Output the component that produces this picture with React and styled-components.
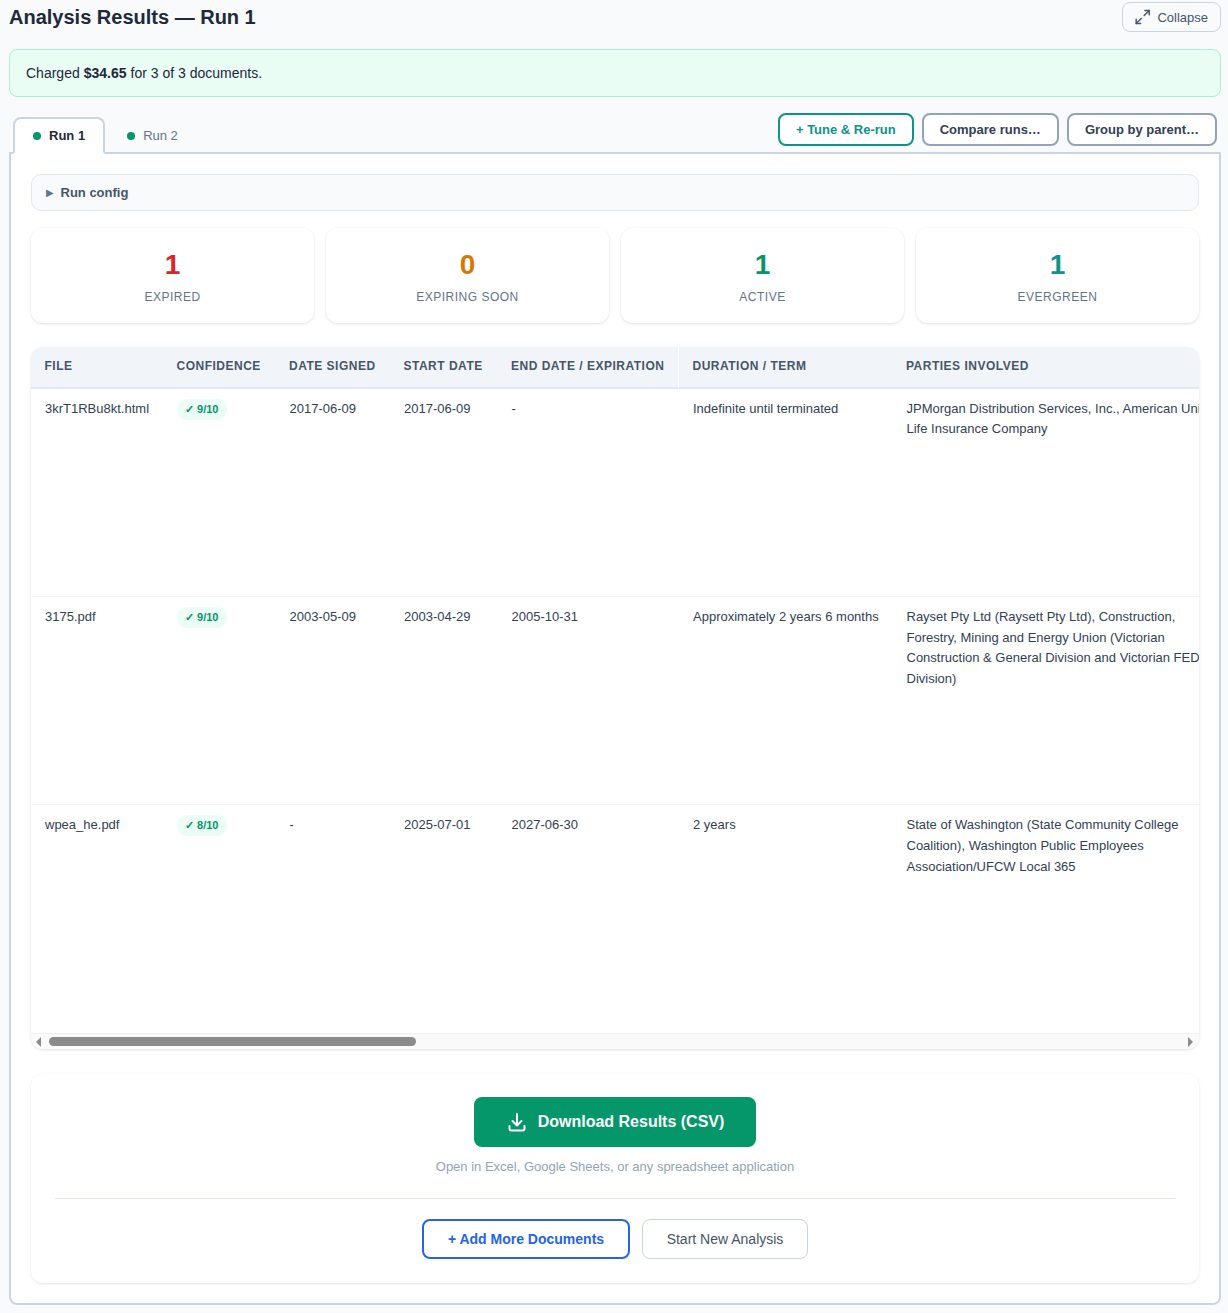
import React from "react";
import styled, { createGlobalStyle } from "styled-components";
import { Maximize2 } from "lucide-react";

const Global = createGlobalStyle`
  html, body { margin: 0; padding: 0; background: #f8fafc; }
  body { font-family: "Liberation Sans", Arial, sans-serif; color: #1e293b; }
  * { box-sizing: border-box; }
`;

const Page = styled.div`
  padding: 2px 7px 9px 9px;
`;
const Header = styled.header`
  display: flex;
  justify-content: space-between;
  align-items: flex-start;
  height: 47px;
`;
const Title = styled.h2`
  margin: 3px 0 0;
  font-size: 20px;
  line-height: 24px;
  font-weight: 700;
  color: #1e293b;
`;
const CollapseButton = styled.button`
  display: inline-flex;
  align-items: center;
  gap: 6px;
  width: 99px;
  height: 30px;
  padding: 0 12px 0 11px;
  border: 1px solid #cbd5e1;
  border-radius: 8px;
  background: #f8fafc;
  color: #475569;
  font: 13px "Liberation Sans", Arial, sans-serif;
  white-space: nowrap;
`;
const Alert = styled.div`
  height: 48px;
  padding: 0 16px;
  display: flex;
  align-items: center;
  background: #e9fdf4;
  border: 1px solid #a7f3d0;
  border-radius: 8px;
  font-size: 14px;
  color: #1e293b;
  strong { margin: 0 4px; }
`;
const TabBar = styled.div`
  display: flex;
  justify-content: space-between;
  align-items: flex-start;
  height: 57px;
  padding: 16px 4px 0 4px;
  position: relative;
  z-index: 1;
`;
const Tabs = styled.div`
  display: flex;
  gap: 2px;
  padding-top: 4px;
`;
const Tab = styled.button`
  display: inline-flex;
  align-items: center;
  gap: 8px;
  height: 37px;
  padding: 0 18px;
  border: 2px solid ${(p) => (p.$active ? "#cbd5e1" : "transparent")};
  border-bottom: ${(p) => (p.$active ? "2px solid #fff" : "2px solid transparent")};
  border-radius: 8px 8px 0 0;
  background: ${(p) => (p.$active ? "#fff" : "transparent")};
  color: ${(p) => (p.$active ? "#1e293b" : "#64748b")};
  font: ${(p) => (p.$active ? 700 : 400)} 13px "Liberation Sans", Arial, sans-serif;
`;
const Dot = styled.span`
  width: 8px;
  height: 8px;
  border-radius: 50%;
  background: #059669;
`;
const Actions = styled.div`
  display: flex;
  gap: 8px;
`;
const ActionButton = styled.button`
  height: 33px;
  padding: 0 16px;
  background: #fff;
  border: 2px solid ${(p) => (p.$accent ? "#0d9488" : "#94a3b8")};
  border-radius: 8px;
  color: ${(p) => (p.$accent ? "#0d9488" : "#334155")};
  font: 700 13px "Liberation Sans", Arial, sans-serif;
  white-space: nowrap;
`;
const Panel = styled.section`
  margin-top: -2px;
  padding: 20px 20px 20px;
  background: #fff;
  border: 2px solid #cbd5e1;
  border-radius: 0 0 8px 8px;
`;
const Config = styled.div`
  height: 37px;
  display: flex;
  align-items: center;
  gap: 6.5px;
  padding: 0 14px;
  background: #f8fafc;
  border: 1px solid #e2e8f0;
  border-radius: 10px;
  color: #475569;
  font-size: 13px;
  font-weight: 700;
`;
const Caret = styled.span`
  font-size: 10px;
  color: #64748b;
  font-weight: 400;
`;
const Stats = styled.div`
  display: grid;
  grid-template-columns: repeat(4, 1fr);
  gap: 12px;
  margin-top: 17px;
`;
const StatCard = styled.div`
  height: 95px;
  padding-top: 20px;
  text-align: center;
  background: #fff;
  border-radius: 12px;
  box-shadow: 0 1px 3px rgba(0, 0, 0, 0.12);
`;
const StatValue = styled.div`
  font-size: 28px;
  line-height: 34px;
  font-weight: 700;
  color: ${(p) => p.$color};
`;
const StatLabel = styled.div`
  margin-top: 7px;
  font-size: 12px;
  line-height: 16px;
  letter-spacing: 0.5px;
  color: #64748b;
`;
const TableWrap = styled.div`
  margin-top: 24px;
  border-radius: 12px;
  overflow: hidden;
  box-shadow: 0 1px 3px rgba(0, 0, 0, 0.12);
`;
const TableViewport = styled.div`
  overflow: hidden;
`;
const Table = styled.table`
  width: 3563px;
  table-layout: fixed;
  border-collapse: separate;
  border-spacing: 0;
  font-size: 13px;
`;
const Col = styled.col`
  width: ${(p) => p.$w}px;
`;
const Th = styled.th`
  height: 42px;
  padding: 0 14px 2px 13.5px;
  text-align: left;
  background: #f1f5f9;
  border-bottom: 2px solid #e2e8f0;
  border-right: ${(p) => (p.$divider ? "1px solid #fff" : "none")};
  color: #475569;
  font-size: 12px;
  font-weight: 700;
  letter-spacing: 0.5px;
  text-transform: uppercase;
  white-space: nowrap;
`;
const Row = styled.tr`
  height: ${(p) => p.$h}px;
`;
const Td = styled.td`
  padding: ${(p) => p.$top}px 14px 10px;
  vertical-align: top;
  color: #334155;
  line-height: 20.8px;
  white-space: ${(p) => (p.$nowrap ? "nowrap" : "normal")};
  border-bottom: ${(p) => (p.$last ? "none" : "1px solid #f1f5f9")};
`;
const Badge = styled.span`
  display: inline-block;
  height: 21px;
  padding: 0 8.5px 0 8px;
  border-radius: 11px;
  background: #ecfdf5;
  color: #059669;
  font-size: 11px;
  font-weight: 700;
  line-height: 21px;
  white-space: nowrap;
`;
const ScrollBar = styled.div`
  display: flex;
  align-items: center;
  height: 16px;
  padding: 0 6px 0 5px;
  background: #fafafa;
  border-top: 1px solid #f0f0f0;
`;
const ArrowLeft = styled.span`
  width: 0;
  height: 0;
  border-top: 5px solid transparent;
  border-bottom: 5px solid transparent;
  border-right: 5px solid #8b8b8b;
`;
const ArrowRight = styled.span`
  width: 0;
  height: 0;
  margin-left: auto;
  border-top: 5px solid transparent;
  border-bottom: 5px solid transparent;
  border-left: 5px solid #8b8b8b;
`;
const Thumb = styled.span`
  width: 367px;
  height: 9px;
  margin-left: 8px;
  border-radius: 5px;
  background: #8b8b8b;
`;
const BottomCard = styled.div`
  margin-top: 25px;
  padding: 23px 24px 24px;
  background: #fff;
  border-radius: 12px;
  box-shadow: 0 1px 3px rgba(0, 0, 0, 0.1);
  display: flex;
  flex-direction: column;
  align-items: center;
`;
const DownloadButton = styled.button`
  display: inline-flex;
  align-items: center;
  justify-content: center;
  gap: 12px;
  width: 282px;
  height: 50px;
  padding: 0 0 0 2px;
  border: none;
  border-radius: 8px;
  background: #059669;
  color: #fff;
  font: 700 16px "Liberation Sans", Arial, sans-serif;
`;
const Hint = styled.div`
  margin-top: 11px;
  font-size: 13px;
  line-height: 17px;
  color: #94a3b8;
`;
const Divider = styled.hr`
  width: 100%;
  height: 1px;
  margin: 23px 0 20px;
  border: none;
  background: #e2e8f0;
`;
const BottomActions = styled.div`
  display: flex;
  gap: 12px;
`;
const AddButton = styled.button`
  width: 208px;
  height: 40px;
  background: #fff;
  border: 2px solid #2563eb;
  border-radius: 8px;
  color: #2563eb;
  font: 700 14px "Liberation Sans", Arial, sans-serif;
`;
const NewButton = styled.button`
  width: 166px;
  height: 40px;
  background: #fff;
  border: 1px solid #cbd5e1;
  border-radius: 8px;
  color: #475569;
  font: 14px "Liberation Sans", Arial, sans-serif;
`;

const DownloadIcon = () => (
  <svg width="18" height="20" viewBox="0 0 18 20" fill="none" stroke="currentColor" strokeWidth="2" strokeLinecap="round" strokeLinejoin="round" aria-hidden="true">
    <path d="M9 2v11" />
    <path d="M4.500 9 9 13.500 13.500 9" />
    <path d="M1.500 14v2.500a2 2 0 0 0 2 2h11a2 2 0 0 0 2-2V14" />
  </svg>
);

const stats = [
  { value: "1", label: "EXPIRED", color: "#dc2626" },
  { value: "0", label: "EXPIRING SOON", color: "#d97706" },
  { value: "1", label: "ACTIVE", color: "#059669" },
  { value: "1", label: "EVERGREEN", color: "#0d9488" },
];
const columns = [
  { name: "File", w: 132 },
  { name: "Confidence", w: 112.5 },
  { name: "Date Signed", w: 114.5 },
  { name: "Start Date", w: 107.5 },
  { name: "End Date / Expiration", w: 181.5, divider: true },
  { name: "Duration / Term", w: 213.5 },
  { name: "Parties Involved", w: 348 },
  { name: "", w: 2353.5 },
];
const rows = [
  { h: 208, top: 9.7, file: "3krT1RBu8kt.html", score: "9/10", signed: "2017-06-09", start: "2017-06-09", end: "-", term: "Indefinite until terminated", parties: "JPMorgan Distribution Services, Inc., American United Life Insurance Company" },
  { h: 208, top: 9.9, file: "3175.pdf", score: "9/10", signed: "2003-05-09", start: "2003-04-29", end: "2005-10-31", term: "Approximately 2 years 6 months", parties: "Rayset Pty Ltd (Raysett Pty Ltd), Construction, Forestry, Mining and Energy Union (Victorian Construction & General Division and Victorian FED Division)" },
  { h: 228, top: 10, file: "wpea_he.pdf", score: "8/10", signed: "-", start: "2025-07-01", end: "2027-06-30", term: "2 years", parties: "State of Washington (State Community College Coalition), Washington Public Employees Association/UFCW Local 365" },
];

export default function App() {
  return (
    <Page>
      <Global />
      <Header>
        <Title>Analysis Results — Run 1</Title>
        <CollapseButton>
          <Maximize2 size={18} strokeWidth={2} />
          Collapse
        </CollapseButton>
      </Header>
      <Alert>
        Charged <strong>$34.65</strong> for 3 of 3 documents.
      </Alert>
      <TabBar>
        <Tabs>
          <Tab $active><Dot />Run 1</Tab>
          <Tab><Dot />Run 2</Tab>
        </Tabs>
        <Actions>
          <ActionButton $accent>+ Tune &amp; Re-run</ActionButton>
          <ActionButton>Compare runs…</ActionButton>
          <ActionButton>Group by parent…</ActionButton>
        </Actions>
      </TabBar>
      <Panel>
        <Config><Caret>▶</Caret>Run config</Config>
        <Stats>
          {stats.map((s) => (
            <StatCard key={s.label}>
              <StatValue $color={s.color}>{s.value}</StatValue>
              <StatLabel>{s.label}</StatLabel>
            </StatCard>
          ))}
        </Stats>
        <TableWrap>
          <TableViewport>
            <Table>
              <colgroup>
                {columns.map((c, i) => <Col key={i} $w={c.w} />)}
              </colgroup>
              <thead>
                <tr>
                  {columns.map((c, i) => <Th key={i} $divider={c.divider}>{c.name}</Th>)}
                </tr>
              </thead>
              <tbody>
                {rows.map((r, i) => {
                  const last = i === rows.length - 1;
                  return (
                    <Row key={r.file} $h={r.h}>
                      <Td $top={r.top} $last={last}>{r.file}</Td>
                      <Td $top={r.top} $last={last}><Badge>✓ {r.score}</Badge></Td>
                      <Td $top={r.top} $last={last}>{r.signed}</Td>
                      <Td $top={r.top} $last={last}>{r.start}</Td>
                      <Td $top={r.top} $last={last}>{r.end}</Td>
                      <Td $top={r.top} $last={last} $nowrap>{r.term}</Td>
                      <Td $top={r.top} $last={last}>{r.parties}</Td>
                      <Td $top={r.top} $last={last} />
                    </Row>
                  );
                })}
              </tbody>
            </Table>
          </TableViewport>
          <ScrollBar>
            <ArrowLeft />
            <Thumb />
            <ArrowRight />
          </ScrollBar>
        </TableWrap>
        <BottomCard>
          <DownloadButton>
            <DownloadIcon />
            Download Results (CSV)
          </DownloadButton>
          <Hint>Open in Excel, Google Sheets, or any spreadsheet application</Hint>
          <Divider />
          <BottomActions>
            <AddButton>+ Add More Documents</AddButton>
            <NewButton>Start New Analysis</NewButton>
          </BottomActions>
        </BottomCard>
      </Panel>
    </Page>
  );
}
